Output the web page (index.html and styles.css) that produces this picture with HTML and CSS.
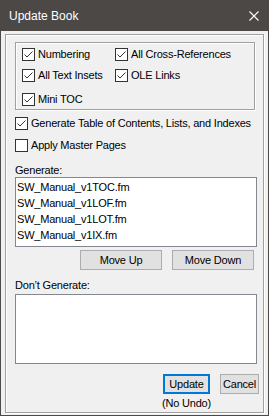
FILE: index.html
```html
<!DOCTYPE html>
<html>
<head>
<meta charset="utf-8">
<link rel="stylesheet" href="styles.css">
</head>
<body>
<div class="window">
  <div class="titlebar">
    <span class="title">Update Book</span>
    <svg class="close" width="10" height="10" viewBox="0 0 10 10"><path d="M0.5 0.5 L9.5 9.5 M9.5 0.5 L0.5 9.5" stroke="#fff" stroke-width="1.1" fill="none"/></svg>
  </div>
  <div class="client">
    <div class="frame">
      <div class="group">
        <div class="check"><span class="cb"><svg width="11" height="11" viewBox="0 0 11 11"><path d="M1.5 5.5 L4 8 L9.5 2.5" stroke="#333" stroke-width="1" fill="none"/></svg></span><span>Numbering</span></div>
        <div class="check"><span class="cb"><svg width="11" height="11" viewBox="0 0 11 11"><path d="M1.5 5.5 L4 8 L9.5 2.5" stroke="#333" stroke-width="1" fill="none"/></svg></span><span>All Cross-References</span></div>
        <div class="check"><span class="cb"><svg width="11" height="11" viewBox="0 0 11 11"><path d="M1.5 5.5 L4 8 L9.5 2.5" stroke="#333" stroke-width="1" fill="none"/></svg></span><span>All Text Insets</span></div>
        <div class="check"><span class="cb"><svg width="11" height="11" viewBox="0 0 11 11"><path d="M1.5 5.5 L4 8 L9.5 2.5" stroke="#333" stroke-width="1" fill="none"/></svg></span><span>OLE Links</span></div>
        <div class="check"><span class="cb"><svg width="11" height="11" viewBox="0 0 11 11"><path d="M1.5 5.5 L4 8 L9.5 2.5" stroke="#333" stroke-width="1" fill="none"/></svg></span><span>Mini TOC</span></div>
      </div>
      <div class="check gen"><span class="cb"><svg width="11" height="11" viewBox="0 0 11 11"><path d="M1.5 5.5 L4 8 L9.5 2.5" stroke="#333" stroke-width="1" fill="none"/></svg></span><span>Generate Table of Contents, Lists, and Indexes</span></div>
      <div class="check apply"><span class="cb"></span><span>Apply Master Pages</span></div>
      <div class="label lbl-gen">Generate:</div>
      <div class="listbox">
        <div class="item">SW_Manual_v1TOC.fm</div>
        <div class="item">SW_Manual_v1LOF.fm</div>
        <div class="item">SW_Manual_v1LOT.fm</div>
        <div class="item">SW_Manual_v1IX.fm</div>
      </div>
      <div class="btnrow">
        <button class="btn move">Move Up</button>
        <button class="btn move">Move Down</button>
      </div>
      <div class="label lbl-dont">Don’t Generate:</div>
      <div class="listbox list-dont"></div>
      <div class="footer">
        <div class="updatecol">
          <button class="btn default">Update</button>
          <span class="noundo">(No Undo)</span>
        </div>
        <button class="btn cancel">Cancel</button>
      </div>
    </div>
  </div>
</div>
</body>
</html>
```

FILE: styles.css
```css
html, body {
  margin: 0;
  padding: 0;
}
body {
  font-family: "Liberation Sans", Arial, sans-serif;
  font-size: 11px;
  letter-spacing: -0.2px;
  color: #000;
}
.window {
  width: 269px;
  height: 416px;
  box-sizing: border-box;
  border: 1px solid #4b4845;
  background: #f0f0f0;
  display: flex;
  flex-direction: column;
}
.titlebar {
  height: 30px;
  flex: none;
  background: #4b4845;
  color: #fff;
  display: flex;
  align-items: center;
  justify-content: space-between;
  padding: 0 9px 0 8px;
  font-size: 12px;
  letter-spacing: 0;
}
.close {
  display: block;
}
.client {
  flex: 1;
  display: flex;
  padding: 3px 4px 2px 4px;
}
.frame {
  flex: 1;
  border: 1px solid #a0a0a0;
  box-shadow: inset 1px 1px 0 #fff, 1px 1px 0 #fff;
  padding: 7px 0 0 9px;
  display: flex;
  flex-direction: column;
}
.group {
  width: 240px;
  height: 68px;
  box-sizing: border-box;
  border: 1px solid #a0a0a0;
  box-shadow: inset 1px 1px 0 #fff, 1px 1px 0 #fff;
  padding: 5px 0 0 6px;
  display: grid;
  grid-template-columns: 93px 1fr;
  grid-template-rows: 21px 24px 13px;
  align-items: start;
}
.check {
  display: flex;
  align-items: center;
  gap: 3px;
  height: 13px;
  line-height: 13px;
  white-space: nowrap;
}
.cb {
  width: 13px;
  height: 13px;
  box-sizing: border-box;
  border: 1px solid #333;
  background: #fff;
  flex: none;
}
.cb svg {
  display: block;
}
.gen {
  margin-top: 7px;
}
.apply {
  margin-top: 9px;
}
.label {
  height: 13px;
  line-height: 13px;
}
.lbl-gen {
  margin-top: 12px;
}
.listbox {
  width: 242px;
  height: 70px;
  box-sizing: border-box;
  border: 1px solid #828790;
  background: #fff;
  padding: 1px 0 0 1px;
}
.item {
  height: 16px;
  line-height: 16px;
}
.btnrow {
  width: 242px;
  display: flex;
  justify-content: flex-end;
  gap: 10px;
  padding-right: 3px;
  box-sizing: border-box;
  margin-top: 3px;
}
.btn {
  font-family: inherit;
  font-size: 11px;
  letter-spacing: -0.2px;
  color: #000;
  background: #e1e1e1;
  border: 1px solid #adadad;
  border-radius: 0;
  height: 20px;
  padding: 0;
  margin: 0;
  box-sizing: border-box;
}
.move {
  width: 82px;
}
.lbl-dont {
  margin-top: 9px;
}
.list-dont {
  margin-top: 2px;
}
.footer {
  display: flex;
  justify-content: flex-end;
  align-items: flex-start;
  gap: 10px;
  padding-right: 4px;
  margin-top: 10px;
}
.updatecol {
  display: flex;
  flex-direction: column;
  align-items: center;
  width: 47px;
}
.default {
  width: 47px;
  border: 2px solid #0078d7;
}
.cancel {
  width: 39px;
}
.noundo {
  margin-top: 3px;
  line-height: 13px;
  white-space: nowrap;
}
```
